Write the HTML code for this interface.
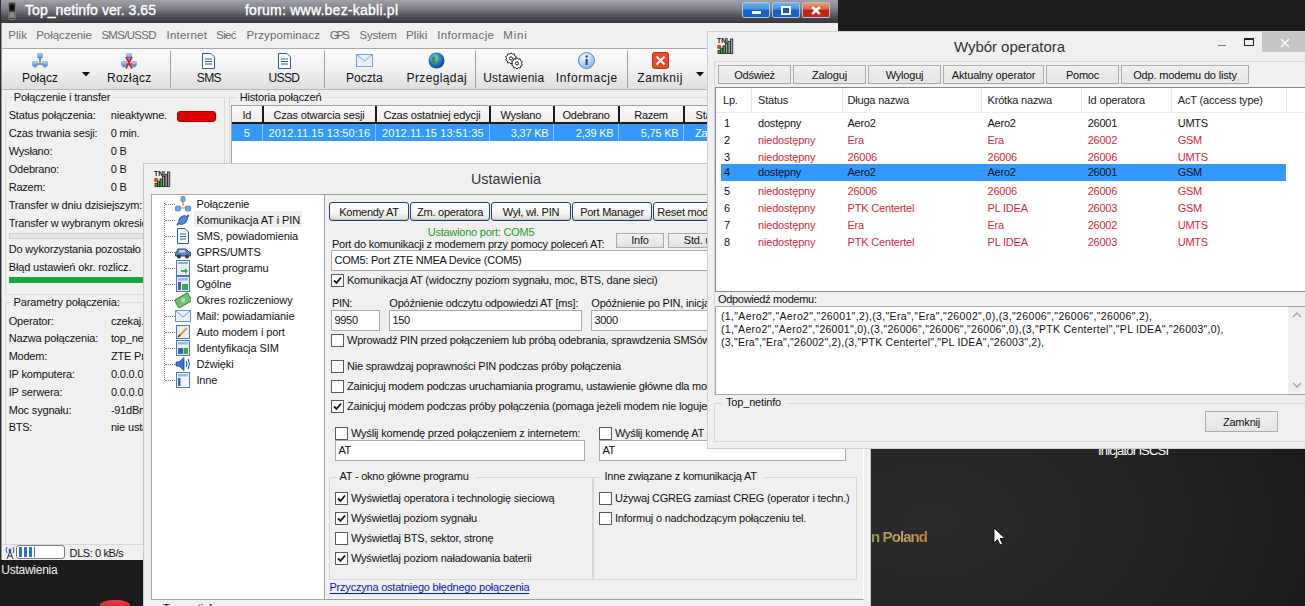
<!DOCTYPE html>
<html><head><meta charset="utf-8"><title>Top_netinfo</title>
<style>
html,body{margin:0;padding:0;width:1305px;height:606px;overflow:hidden;background:#222}
body{position:relative;font-family:"Liberation Sans", sans-serif}
div,span,svg{position:absolute;display:block}
span{white-space:pre}
</style></head><body>
<div style="left:0;top:0;width:1305px;height:606px;background:radial-gradient(ellipse 420px 260px at 930px 520px,#2b2b2b 0%,#232323 55%,#191919 100%)"></div>
<div style="left:838px;top:0;width:467px;height:32px;background:#1c1c1c"></div>
<div style="left:0;top:560px;width:143px;height:46px;background:#1b1b1b"></div>
<span style="left:1098px;top:444.00px;font-size:13px;line-height:13px;color:#fff;font-weight:400;letter-spacing:-0.812px;">Inicjator iSCSI</span>
<span style="left:871px;top:529px;font-size:15px;line-height:15px;font-weight:700;letter-spacing:-0.9px;background:linear-gradient(90deg,#9a9a58,#c7a060 60%,#c8783a);-webkit-background-clip:text;color:transparent">n Poland</span>
<svg style="position:absolute;left:993px;top:527px;" width="14" height="20" viewBox="0 0 14 20"><path d="M1 1 L1 16 L4.5 12.5 L7 18 L9.5 17 L7 11.5 L12 11.5 Z" fill="#fff" stroke="#000" stroke-width="0.8"/></svg>
<span style="left:1.3px;top:563.84px;font-size:12px;line-height:12px;color:#f2f2f2;font-weight:400;letter-spacing:-0.256px;">Ustawienia</span>
<div style="left:100px;top:600px;width:30px;height:10px;background:linear-gradient(#f04048,#c81820);border-radius:50% 50% 0 0"></div>
<div style="left:0px;top:0px;width:838px;height:23px;background:linear-gradient(#a2a2aa 0%,#7c7c84 40%,#4a4a52 75%,#38383e 100%)"></div>
<div style="left:0px;top:0px;width:1px;height:560px;background:#2c2c30"></div>
<div style="left:1px;top:23px;width:1px;height:537px;background:#9a9a9a"></div>
<svg style="position:absolute;left:8px;top:2px;" width="8" height="18" viewBox="0 0 8 18"><rect x="0.5" y="0.5" width="7" height="17" rx="1.5" fill="#444" stroke="#777"/><rect x="1.5" y="2.5" width="5" height="6" fill="#111"/><rect x="1.5" y="10" width="5" height="6" fill="#8a8a8a"/></svg>
<span style="left:25px;top:3.45px;font-size:14px;line-height:14px;color:#fff;font-weight:400;letter-spacing:0.05px;-webkit-text-stroke:0.35px #fff">Top_netinfo ver. 3.65</span>
<span style="left:245px;top:3.45px;font-size:14px;line-height:14px;color:#fff;font-weight:400;letter-spacing:0.235px;-webkit-text-stroke:0.35px #fff">forum: www.bez-kabli.pl</span>
<div style="left:742px;top:2px;width:28px;height:16px;border:1px solid #a9c3d8;border-radius:2px;box-sizing:border-box;background:linear-gradient(#6eb2ea 0%,#3f8fd8 45%,#1a5fc4 50%,#1a64cc 100%)"><div style="left:9px;top:8px;width:9px;height:3px;background:#fff"></div></div>
<div style="left:772px;top:2px;width:28px;height:16px;border:1px solid #a9c3d8;border-radius:2px;box-sizing:border-box;background:linear-gradient(#6eb2ea 0%,#3f8fd8 45%,#1a5fc4 50%,#1a64cc 100%)"><div style="left:8px;top:2.5px;width:10px;height:9px;border:2px solid #fff;border-top-width:2.5px;box-sizing:border-box;background:#1a58b8"></div></div>
<div style="left:802px;top:2px;width:28px;height:16px;border:1px solid #a9c3d8;border-radius:2px;box-sizing:border-box;background:linear-gradient(#e8a070 0%,#e06040 45%,#c81a0a 50%,#d0280e 100%)"><svg style="left:8px;top:2.5px" width="10" height="9" viewBox="0 0 10 9"><path d="M1.2 1 L8.8 8 M8.8 1 L1.2 8" stroke="#fff" stroke-width="2.4"/></svg></div>
<div style="left:2px;top:23px;width:836px;height:25px;background:#f0f0f0"></div>
<span style="left:8.3px;top:30.07px;font-size:11.5px;line-height:11.5px;color:#6a6a6a;font-weight:400;letter-spacing:0.023px;">Plik</span>
<span style="left:36.2px;top:30.07px;font-size:11.5px;line-height:11.5px;color:#6a6a6a;font-weight:400;letter-spacing:-0.052px;">Połączenie</span>
<span style="left:101.4px;top:30.07px;font-size:11.5px;line-height:11.5px;color:#6a6a6a;font-weight:400;letter-spacing:-0.697px;">SMS/USSD</span>
<span style="left:166.6px;top:30.07px;font-size:11.5px;line-height:11.5px;color:#6a6a6a;font-weight:400;letter-spacing:0.186px;">Internet</span>
<span style="left:216.2px;top:30.07px;font-size:11.5px;line-height:11.5px;color:#6a6a6a;font-weight:400;letter-spacing:-0.692px;">Sieć</span>
<span style="left:246.4px;top:30.07px;font-size:11.5px;line-height:11.5px;color:#6a6a6a;font-weight:400;letter-spacing:0.126px;">Przypominacz</span>
<span style="left:329.7px;top:30.07px;font-size:11.5px;line-height:11.5px;color:#6a6a6a;font-weight:400;letter-spacing:-2.048px;">GPS</span>
<span style="left:359.5px;top:30.07px;font-size:11.5px;line-height:11.5px;color:#6a6a6a;font-weight:400;letter-spacing:-0.209px;">System</span>
<span style="left:406px;top:30.07px;font-size:11.5px;line-height:11.5px;color:#6a6a6a;font-weight:400;letter-spacing:0.077px;">Pliki</span>
<span style="left:437.2px;top:30.07px;font-size:11.5px;line-height:11.5px;color:#6a6a6a;font-weight:400;letter-spacing:0.346px;">Informacje</span>
<span style="left:503.2px;top:30.07px;font-size:11.5px;line-height:11.5px;color:#6a6a6a;font-weight:400;letter-spacing:0.869px;">Mini</span>
<div style="left:2px;top:48px;width:836px;height:1px;background:#a8a8a8"></div>
<div style="left:2px;top:49px;width:836px;height:40px;background:linear-gradient(#fbfbfb 0%,#f2f2f2 50%,#dedede 100%)"></div>
<div style="left:2px;top:89px;width:836px;height:1px;background:#b8b8b8"></div>
<div style="left:170px;top:51px;width:1px;height:37px;background:#a0a0a0"></div>
<div style="left:324px;top:51px;width:1px;height:37px;background:#a0a0a0"></div>
<div style="left:475px;top:51px;width:1px;height:37px;background:#a0a0a0"></div>
<div style="left:627px;top:51px;width:1px;height:37px;background:#a0a0a0"></div>
<span style="left:-160px;width:400px;text-align:center;top:71.64px;font-size:12px;line-height:12px;color:#111;font-weight:400;letter-spacing:0.034px;">Połącz</span>
<span style="left:-70.80000000000001px;width:400px;text-align:center;top:71.64px;font-size:12px;line-height:12px;color:#111;font-weight:400;letter-spacing:0.252px;">Rozłącz</span>
<span style="left:8.900000000000006px;width:400px;text-align:center;top:71.64px;font-size:12px;line-height:12px;color:#111;font-weight:400;letter-spacing:-0.508px;">SMS</span>
<span style="left:83.89999999999998px;width:400px;text-align:center;top:71.64px;font-size:12px;line-height:12px;color:#111;font-weight:400;letter-spacing:-0.581px;">USSD</span>
<span style="left:164.3px;width:400px;text-align:center;top:71.64px;font-size:12px;line-height:12px;color:#111;font-weight:400;letter-spacing:-0.017px;">Poczta</span>
<span style="left:236.8px;width:400px;text-align:center;top:71.64px;font-size:12px;line-height:12px;color:#111;font-weight:400;letter-spacing:0.366px;">Przeglądaj</span>
<span style="left:313.79999999999995px;width:400px;text-align:center;top:71.64px;font-size:12px;line-height:12px;color:#111;font-weight:400;letter-spacing:0.255px;">Ustawienia</span>
<span style="left:386.79999999999995px;width:400px;text-align:center;top:71.64px;font-size:12px;line-height:12px;color:#111;font-weight:400;letter-spacing:0.608px;">Informacje</span>
<span style="left:460.1px;width:400px;text-align:center;top:71.64px;font-size:12px;line-height:12px;color:#111;font-weight:400;letter-spacing:0.497px;">Zamknij</span>
<svg style="position:absolute;left:81.7px;top:72px;" width="8" height="5" viewBox="0 0 8 5"><path d="M0 0 L8 0 L4 4.5 Z" fill="#111"/></svg>
<svg style="position:absolute;left:695.5px;top:72px;" width="8" height="5" viewBox="0 0 8 5"><path d="M0 0 L8 0 L4 4.5 Z" fill="#111"/></svg>
<svg style="position:absolute;left:32px;top:53px;" width="16" height="16" viewBox="0 0 16 16"><defs><linearGradient id="ng" x1="0" y1="0" x2="0" y2="1"><stop offset="0" stop-color="#b8dcfa"/><stop offset="1" stop-color="#3f86d8"/></linearGradient></defs><path d="M8 6 V10 M3 11 H13" stroke="#3a3a2a" stroke-width="1"/><circle cx="8" cy="10.5" r="1.3" fill="#c0a040"/><rect x="5.5" y="0.5" width="5" height="4.5" rx="1" fill="url(#ng)" stroke="#4a86c8" stroke-width="0.5"/><rect x="6.5" y="5.0" width="3" height="1.5" fill="#6a9ad0"/><rect x="0.5" y="8.5" width="5" height="4.5" rx="1" fill="url(#ng)" stroke="#4a86c8" stroke-width="0.5"/><rect x="1.5" y="13.0" width="3" height="1.5" fill="#6a9ad0"/><rect x="10.5" y="8.5" width="5" height="4.5" rx="1" fill="url(#ng)" stroke="#4a86c8" stroke-width="0.5"/><rect x="11.5" y="13.0" width="3" height="1.5" fill="#6a9ad0"/></svg>
<svg style="position:absolute;left:121px;top:53px;" width="16" height="16" viewBox="0 0 16 16"><defs><linearGradient id="ng" x1="0" y1="0" x2="0" y2="1"><stop offset="0" stop-color="#b8dcfa"/><stop offset="1" stop-color="#3f86d8"/></linearGradient></defs><path d="M8 6 V10 M3 11 H13" stroke="#3a3a2a" stroke-width="1"/><circle cx="8" cy="10.5" r="1.3" fill="#c0a040"/><rect x="5.5" y="0.5" width="5" height="4.5" rx="1" fill="url(#ng)" stroke="#4a86c8" stroke-width="0.5"/><rect x="6.5" y="5.0" width="3" height="1.5" fill="#6a9ad0"/><rect x="0.5" y="8.5" width="5" height="4.5" rx="1" fill="url(#ng)" stroke="#4a86c8" stroke-width="0.5"/><rect x="1.5" y="13.0" width="3" height="1.5" fill="#6a9ad0"/><rect x="10.5" y="8.5" width="5" height="4.5" rx="1" fill="url(#ng)" stroke="#4a86c8" stroke-width="0.5"/><rect x="11.5" y="13.0" width="3" height="1.5" fill="#6a9ad0"/><path d="M5 4 L11 15.5 M11 4 L5 15.5" stroke="#e41818" stroke-width="1.7"/></svg>
<svg style="position:absolute;left:202px;top:53px;" width="13" height="16" viewBox="0 0 13 16"><path d="M0.5 0.5 H9 L12.5 4 V15.5 H0.5 Z" fill="#fff" stroke="#2a58a8"/><path d="M3 6 H10 M3 8.5 H10 M3 11 H10" stroke="#2a58a8" stroke-width="1"/></svg>
<svg style="position:absolute;left:278px;top:53px;" width="13" height="16" viewBox="0 0 13 16"><path d="M0.5 0.5 H9 L12.5 4 V15.5 H0.5 Z" fill="#fff" stroke="#2a58a8"/><path d="M3 6 H10 M3 8.5 H10 M3 11 H10" stroke="#2a58a8" stroke-width="1"/></svg>
<svg style="position:absolute;left:356px;top:54px;" width="17" height="13" viewBox="0 0 17 13"><rect x="0.5" y="0.5" width="16" height="12" fill="#e8f0fa" stroke="#7aa0cc"/><path d="M0.5 0.5 L8.5 7 L16.5 0.5" fill="none" stroke="#7aa0cc"/></svg>
<svg style="position:absolute;left:428px;top:52px;" width="17" height="17" viewBox="0 0 17 17"><defs><radialGradient id="g1" cx="0.4" cy="0.35" r="0.7"><stop offset="0" stop-color="#9fd0ff"/><stop offset="0.5" stop-color="#2a7fd0"/><stop offset="1" stop-color="#0a3a80"/></radialGradient></defs><circle cx="8.5" cy="8.5" r="8" fill="url(#g1)"/><path d="M4 5 Q7 3 8 6 Q6 9 9 11 Q7 14 5 12 Q3 9 4 5Z M10 3 Q13 4 14 7 Q12 8 11 6Z" fill="#3a9a3a"/></svg>
<svg style="position:absolute;left:505px;top:52px;" width="18" height="17" viewBox="0 0 18 17"><g fill="#fff" stroke="#222" stroke-width="1"><path d="M6 0.8 L7.3 2.2 L9.2 1.8 L9.6 3.7 L11.3 4.6 L10.5 6.4 L11.3 8.2 L9.6 9.1 L9.2 11 L7.3 10.6 L6 12 L4.7 10.6 L2.8 11 L2.4 9.1 L0.7 8.2 L1.5 6.4 L0.7 4.6 L2.4 3.7 L2.8 1.8 L4.7 2.2 Z"/><path d="M12 5.8 L13.3 7.2 L15.2 6.8 L15.6 8.7 L17.3 9.6 L16.5 11.4 L17.3 13.2 L15.6 14.1 L15.2 16 L13.3 15.6 L12 17 L10.7 15.6 L8.8 16 L8.4 14.1 L6.7 13.2 L7.5 11.4 L6.7 9.6 L8.4 8.7 L8.8 6.8 L10.7 7.2 Z"/><circle cx="6" cy="6.4" r="1.6"/><circle cx="12" cy="11.4" r="1.6"/></g></svg>
<svg style="position:absolute;left:578px;top:52px;" width="17" height="17" viewBox="0 0 17 17"><defs><radialGradient id="g2" cx="0.4" cy="0.3" r="0.8"><stop offset="0" stop-color="#fff"/><stop offset="1" stop-color="#7ab0e8"/></radialGradient></defs><circle cx="8.5" cy="8.5" r="8" fill="url(#g2)" stroke="#4a88d0"/><rect x="7.5" y="7" width="2.2" height="6" fill="#1a4ea8"/><circle cx="8.6" cy="4.5" r="1.2" fill="#1a4ea8"/></svg>
<svg style="position:absolute;left:652px;top:52px;" width="17" height="17" viewBox="0 0 17 17"><rect x="0.5" y="0.5" width="16" height="16" rx="2" fill="#e84a30" stroke="#c03018"/><path d="M4.5 4.5 L12.5 12.5 M12.5 4.5 L4.5 12.5" stroke="#fff" stroke-width="1.8"/></svg>
<div style="left:2px;top:90px;width:706px;height:454px;background:#f0f0f0"></div>
<div style="left:5px;top:97px;width:220px;height:198px;border:1px solid #dcdcdc;box-sizing:border-box"></div>
<div style="left:12px;top:92px;width:90px;height:10px;background:#f0f0f0"></div>
<span style="left:13.8px;top:92.19px;font-size:11px;line-height:11px;color:#111;font-weight:400;letter-spacing:-0.15px;">Połączenie i transfer</span>
<span style="left:8.7px;top:109.69px;font-size:11px;line-height:11px;color:#111;font-weight:400;letter-spacing:-0.159px;">Status połączenia:</span>
<span style="left:110.8px;top:109.69px;font-size:11px;line-height:11px;color:#111;font-weight:400;letter-spacing:-0.174px;">nieaktywne.</span>
<span style="left:8.7px;top:127.69px;font-size:11px;line-height:11px;color:#111;font-weight:400;letter-spacing:-0.153px;">Czas trwania sesji:</span>
<span style="left:110.8px;top:127.69px;font-size:11px;line-height:11px;color:#111;font-weight:400;letter-spacing:-0.18px;">0 min.</span>
<span style="left:8.7px;top:145.69px;font-size:11px;line-height:11px;color:#111;font-weight:400;letter-spacing:-0.193px;">Wysłano:</span>
<span style="left:110.8px;top:145.69px;font-size:11px;line-height:11px;color:#111;font-weight:400;letter-spacing:-0.248px;">0 B</span>
<span style="left:8.7px;top:163.69px;font-size:11px;line-height:11px;color:#111;font-weight:400;letter-spacing:-0.195px;">Odebrano:</span>
<span style="left:110.8px;top:163.69px;font-size:11px;line-height:11px;color:#111;font-weight:400;letter-spacing:-0.248px;">0 B</span>
<span style="left:8.7px;top:181.69px;font-size:11px;line-height:11px;color:#111;font-weight:400;letter-spacing:-0.227px;">Razem:</span>
<span style="left:110.8px;top:181.69px;font-size:11px;line-height:11px;color:#111;font-weight:400;letter-spacing:-0.248px;">0 B</span>
<div style="left:177px;top:111px;width:39px;height:11px;background:#e00000;border-radius:3px;border:1px solid #b00000;box-sizing:border-box"></div>
<span style="left:8.7px;top:199.69px;font-size:11px;line-height:11px;color:#111;font-weight:400;letter-spacing:-0.153px;">Transfer w dniu dzisiejszym:</span>
<span style="left:8.7px;top:217.69px;font-size:11px;line-height:11px;color:#111;font-weight:400;letter-spacing:-0.163px;">Transfer w wybranym okresie:</span>
<div style="left:9px;top:233px;width:134px;height:6px;background:#e6e6e6;border:1px solid #cfcfcf;box-sizing:border-box"></div>
<span style="left:8.7px;top:243.69px;font-size:11px;line-height:11px;color:#111;font-weight:400;letter-spacing:-0.164px;">Do wykorzystania pozostało</span>
<span style="left:8.7px;top:261.69px;font-size:11px;line-height:11px;color:#111;font-weight:400;letter-spacing:-0.146px;">Błąd ustawień okr. rozlicz.</span>
<div style="left:9px;top:277px;width:134px;height:6px;background:#14a83a"></div>
<div style="left:5px;top:302px;width:220px;height:255px;border:1px solid #dcdcdc;box-sizing:border-box"></div>
<div style="left:12px;top:297px;width:96px;height:10px;background:#f0f0f0"></div>
<span style="left:13.6px;top:296.69px;font-size:11px;line-height:11px;color:#111;font-weight:400;letter-spacing:-0.164px;">Parametry połączenia:</span>
<span style="left:8.7px;top:315.69px;font-size:11px;line-height:11px;color:#111;font-weight:400;letter-spacing:-0.174px;">Operator:</span>
<span style="left:110.9px;top:315.69px;font-size:11px;line-height:11px;color:#111;font-weight:400;letter-spacing:-0.151px;">czekaj...</span>
<span style="left:8.7px;top:333.19px;font-size:11px;line-height:11px;color:#111;font-weight:400;letter-spacing:-0.173px;">Nazwa połączenia:</span>
<span style="left:110.9px;top:333.19px;font-size:11px;line-height:11px;color:#111;font-weight:400;letter-spacing:-0.163px;">top_netinfo</span>
<span style="left:8.7px;top:350.99px;font-size:11px;line-height:11px;color:#111;font-weight:400;letter-spacing:-0.239px;">Modem:</span>
<span style="left:110.9px;top:350.99px;font-size:11px;line-height:11px;color:#111;font-weight:400;letter-spacing:-0.166px;">ZTE Proprietary</span>
<span style="left:8.7px;top:368.89px;font-size:11px;line-height:11px;color:#111;font-weight:400;letter-spacing:-0.171px;">IP komputera:</span>
<span style="left:110.9px;top:368.89px;font-size:11px;line-height:11px;color:#111;font-weight:400;letter-spacing:-0.168px;">0.0.0.0</span>
<span style="left:8.7px;top:386.69px;font-size:11px;line-height:11px;color:#111;font-weight:400;letter-spacing:-0.166px;">IP serwera:</span>
<span style="left:110.9px;top:386.69px;font-size:11px;line-height:11px;color:#111;font-weight:400;letter-spacing:-0.168px;">0.0.0.0</span>
<span style="left:8.7px;top:404.69px;font-size:11px;line-height:11px;color:#111;font-weight:400;letter-spacing:-0.177px;">Moc sygnału:</span>
<span style="left:110.9px;top:404.69px;font-size:11px;line-height:11px;color:#111;font-weight:400;letter-spacing:-0.231px;">-91dBm</span>
<span style="left:8.7px;top:422.19px;font-size:11px;line-height:11px;color:#111;font-weight:400;letter-spacing:-0.245px;">BTS:</span>
<span style="left:110.9px;top:422.19px;font-size:11px;line-height:11px;color:#111;font-weight:400;letter-spacing:-0.168px;">nie ustawione</span>
<div style="left:2px;top:544px;width:141px;height:16px;background:#f0f0f0;border-top:1px solid #d8d8d8;box-sizing:border-box"></div>
<svg style="position:absolute;left:5px;top:546px;" width="10" height="13" viewBox="0 0 10 13"><circle cx="5" cy="4" r="1.5" fill="#2a5ab0"/><path d="M2 1 Q0 4 2 7 M8 1 Q10 4 8 7" stroke="#2a5ab0" fill="none"/><path d="M5 5 L2 13 M5 5 L8 13 M3 10 H7" stroke="#333"/></svg>
<div style="left:16px;top:545px;width:49px;height:14px;background:#fff;border:1px solid #7a7a7a;border-radius:3px;box-sizing:border-box"></div>
<div style="left:19px;top:547px;width:3px;height:10px;background:#2e6cd0"></div>
<div style="left:24px;top:547px;width:3px;height:10px;background:#2e6cd0"></div>
<div style="left:29px;top:547px;width:3px;height:10px;background:#2e6cd0"></div>
<div style="left:34px;top:547px;width:1px;height:10px;background:#2e6cd0"></div>
<span style="left:69.6px;top:547.89px;font-size:11px;line-height:11px;color:#111;font-weight:400;letter-spacing:-0.408px;">DLS: 0 kB/s</span>
<div style="left:229px;top:97px;width:500px;height:80px;border:1px solid #dcdcdc;box-sizing:border-box"></div>
<div style="left:236px;top:92px;width:90px;height:10px;background:#f0f0f0"></div>
<span style="left:239.7px;top:92.19px;font-size:11px;line-height:11px;color:#111;font-weight:400;letter-spacing:-0.158px;">Historia połączeń</span>
<div style="left:231px;top:105px;width:477px;height:59px;background:#fff;border:1px solid #a0a0a0;border-right:none;box-sizing:border-box"></div>
<div style="left:232px;top:106px;width:476px;height:17px;background:linear-gradient(#fafafa,#ececec)"></div>
<div style="left:232px;top:122px;width:476px;height:2px;background:#1a1a1a"></div>
<div style="left:262px;top:106px;width:2px;height:17px;background:#1a1a1a"></div>
<div style="left:375px;top:106px;width:2px;height:17px;background:#1a1a1a"></div>
<div style="left:489px;top:106px;width:2px;height:17px;background:#1a1a1a"></div>
<div style="left:553px;top:106px;width:2px;height:17px;background:#1a1a1a"></div>
<div style="left:618px;top:106px;width:2px;height:17px;background:#1a1a1a"></div>
<div style="left:683px;top:106px;width:2px;height:17px;background:#1a1a1a"></div>
<div style="left:232px;top:124px;width:476px;height:17px;background:#3399ff"></div>
<div style="left:262px;top:124px;width:1px;height:17px;background:#8cc6ff"></div>
<div style="left:375px;top:124px;width:1px;height:17px;background:#8cc6ff"></div>
<div style="left:489px;top:124px;width:1px;height:17px;background:#8cc6ff"></div>
<div style="left:553px;top:124px;width:1px;height:17px;background:#8cc6ff"></div>
<div style="left:618px;top:124px;width:1px;height:17px;background:#8cc6ff"></div>
<div style="left:683px;top:124px;width:1px;height:17px;background:#8cc6ff"></div>
<span style="left:46.69999999999999px;width:400px;text-align:center;top:110.19px;font-size:11px;line-height:11px;color:#111;font-weight:400;letter-spacing:-0.276px;">Id</span>
<span style="left:119px;width:400px;text-align:center;top:110.19px;font-size:11px;line-height:11px;color:#111;font-weight:400;letter-spacing:-0.157px;">Czas otwarcia sesji</span>
<span style="left:232px;width:400px;text-align:center;top:110.19px;font-size:11px;line-height:11px;color:#111;font-weight:400;letter-spacing:-0.15px;">Czas ostatniej edycji</span>
<span style="left:320.79999999999995px;width:400px;text-align:center;top:110.19px;font-size:11px;line-height:11px;color:#111;font-weight:400;letter-spacing:-0.21px;">Wysłano</span>
<span style="left:386px;width:400px;text-align:center;top:110.19px;font-size:11px;line-height:11px;color:#111;font-weight:400;letter-spacing:-0.21px;">Odebrano</span>
<span style="left:451px;width:400px;text-align:center;top:110.19px;font-size:11px;line-height:11px;color:#111;font-weight:400;letter-spacing:-0.261px;">Razem</span>
<span style="left:695.5px;top:110.19px;font-size:11px;line-height:11px;color:#111;font-weight:400;letter-spacing:-0.187px;">Status</span>
<span style="left:46.69999999999999px;width:400px;text-align:center;top:127.69px;font-size:11px;line-height:11px;color:#fff;font-weight:400;letter-spacing:-0.184px;">5</span>
<span style="left:268.6px;top:127.69px;font-size:11px;line-height:11px;color:#fff;font-weight:400;letter-spacing:0.082px;">2012.11.15 13:50:16</span>
<span style="left:382px;top:127.69px;font-size:11px;line-height:11px;color:#fff;font-weight:400;letter-spacing:0.082px;">2012.11.15 13:51:35</span>
<span style="left:148.5px;width:400px;text-align:right;top:127.69px;font-size:11px;line-height:11px;color:#fff;font-weight:400;letter-spacing:-0.196px;">3,37 KB</span>
<span style="left:213.5px;width:400px;text-align:right;top:127.69px;font-size:11px;line-height:11px;color:#fff;font-weight:400;letter-spacing:-0.196px;">2,39 KB</span>
<span style="left:278.5px;width:400px;text-align:right;top:127.69px;font-size:11px;line-height:11px;color:#fff;font-weight:400;letter-spacing:-0.196px;">5,75 KB</span>
<span style="left:695px;top:127.69px;font-size:11px;line-height:11px;color:#fff;font-weight:400;letter-spacing:-0.2px;">Zakończone</span>
<div style="left:143px;top:163px;width:728px;height:450px;background:#f0f0f0;border:1px solid #c8c8c8;box-sizing:border-box"></div>
<svg style="position:absolute;left:153px;top:170px;" width="18" height="17" viewBox="0 0 18 17"><text x="1" y="5.6" font-family="Liberation Sans" font-weight="700" font-size="6.8" fill="#111">TNI</text><rect x="2.0" y="13.5" width="2.3" height="3.0" fill="#30b030" stroke="#111" stroke-width="0.7"/><rect x="4.5" y="11.2" width="2.3" height="5.3" fill="#30b030" stroke="#111" stroke-width="0.7"/><rect x="7.0" y="8.9" width="2.3" height="7.6" fill="#30b030" stroke="#111" stroke-width="0.7"/><rect x="9.5" y="6.6" width="2.3" height="9.9" fill="#9aa0a0" stroke="#111" stroke-width="0.7"/><rect x="12.0" y="4.3" width="2.3" height="12.2" fill="#9aa0a0" stroke="#111" stroke-width="0.7"/><rect x="14.5" y="2.0" width="2.3" height="14.5" fill="#9aa0a0" stroke="#111" stroke-width="0.7"/><circle cx="3.2" cy="10" r="2.2" fill="#d84028"/></svg>
<span style="left:471px;top:171.90px;font-size:14.3px;line-height:14.3px;color:#333;font-weight:400;letter-spacing:0.007px;">Ustawienia</span>
<div style="left:151px;top:194px;width:174px;height:406px;background:#fff;border:1px solid #a8a8a8;box-sizing:border-box"></div>
<div style="left:164px;top:203px;width:0;height:177px;border-left:1px dotted #808080"></div>
<div style="left:165px;top:204px;width:10px;height:0;border-top:1px dotted #808080"></div>
<div style="left:165px;top:220px;width:10px;height:0;border-top:1px dotted #808080"></div>
<div style="left:165px;top:236px;width:10px;height:0;border-top:1px dotted #808080"></div>
<div style="left:165px;top:252px;width:10px;height:0;border-top:1px dotted #808080"></div>
<div style="left:165px;top:268px;width:10px;height:0;border-top:1px dotted #808080"></div>
<div style="left:165px;top:284px;width:10px;height:0;border-top:1px dotted #808080"></div>
<div style="left:165px;top:300px;width:10px;height:0;border-top:1px dotted #808080"></div>
<div style="left:165px;top:316px;width:10px;height:0;border-top:1px dotted #808080"></div>
<div style="left:165px;top:332px;width:10px;height:0;border-top:1px dotted #808080"></div>
<div style="left:165px;top:348px;width:10px;height:0;border-top:1px dotted #808080"></div>
<div style="left:165px;top:364px;width:10px;height:0;border-top:1px dotted #808080"></div>
<div style="left:165px;top:380px;width:10px;height:0;border-top:1px dotted #808080"></div>
<div style="left:194px;top:211px;width:108px;height:16px;background:#eeeeee"></div>
<span style="left:196.4px;top:198.69px;font-size:11px;line-height:11px;color:#111;font-weight:400;letter-spacing:-0.09px;">Połączenie</span>
<span style="left:196.4px;top:214.69px;font-size:11px;line-height:11px;color:#111;font-weight:400;letter-spacing:-0.083px;">Komunikacja AT i PIN</span>
<span style="left:196.4px;top:230.69px;font-size:11px;line-height:11px;color:#111;font-weight:400;letter-spacing:-0.091px;">SMS, powiadomienia</span>
<span style="left:196.4px;top:246.69px;font-size:11px;line-height:11px;color:#111;font-weight:400;letter-spacing:-0.123px;">GPRS/UMTS</span>
<span style="left:196.4px;top:262.69px;font-size:11px;line-height:11px;color:#111;font-weight:400;letter-spacing:-0.085px;">Start programu</span>
<span style="left:196.4px;top:278.69px;font-size:11px;line-height:11px;color:#111;font-weight:400;letter-spacing:-0.106px;">Ogólne</span>
<span style="left:196.4px;top:294.69px;font-size:11px;line-height:11px;color:#111;font-weight:400;letter-spacing:-0.082px;">Okres rozliczeniowy</span>
<span style="left:196.4px;top:310.69px;font-size:11px;line-height:11px;color:#111;font-weight:400;letter-spacing:-0.083px;">Mail: powiadamianie</span>
<span style="left:196.4px;top:326.69px;font-size:11px;line-height:11px;color:#111;font-weight:400;letter-spacing:-0.084px;">Auto modem i port</span>
<span style="left:196.4px;top:342.69px;font-size:11px;line-height:11px;color:#111;font-weight:400;letter-spacing:-0.079px;">Identyfikacja SIM</span>
<span style="left:196.4px;top:358.69px;font-size:11px;line-height:11px;color:#111;font-weight:400;letter-spacing:-0.095px;">Dźwięki</span>
<span style="left:196.4px;top:374.69px;font-size:11px;line-height:11px;color:#111;font-weight:400;letter-spacing:-0.107px;">Inne</span>
<svg style="position:absolute;left:175px;top:196px;" width="16" height="16" viewBox="0 0 16 16"><g fill="#6aaee8" stroke="#2f6fb8" stroke-width="0.6"><rect x="6" y="0.5" width="4" height="5" rx="1"/><rect x="0.5" y="10" width="5" height="5" rx="1"/><rect x="10.5" y="10" width="5" height="5" rx="1"/></g><path d="M8 5 L8 10 M4 12 L12 12" stroke="#b08a30" stroke-width="1.2"/></svg>
<svg style="position:absolute;left:175px;top:212px;" width="16" height="16" viewBox="0 0 16 16"><path d="M2 13 L6 9 M10 7 L14 3" stroke="#3a6ab8" stroke-width="2"/><ellipse cx="8" cy="8" rx="5" ry="3.5" transform="rotate(-45 8 8)" fill="#5a8ad0" stroke="#2a5aa8"/></svg>
<svg style="position:absolute;left:175px;top:228px;" width="16" height="16" viewBox="0 0 16 16"><path d="M2.5 0.5 H10 L13.5 4 V15.5 H2.5 Z" fill="#fff" stroke="#2a58a8"/><path d="M5 6 H11 M5 8.5 H11 M5 11 H11" stroke="#2a58a8"/></svg>
<svg style="position:absolute;left:175px;top:244px;" width="16" height="16" viewBox="0 0 16 16"><path d="M1 9 L3 5 H11 L14 8 H15.5 V12 H0.5 V9Z" fill="#5a86c0" stroke="#2a4a80"/><circle cx="4" cy="12.5" r="2" fill="#333"/><circle cx="12" cy="12.5" r="2" fill="#333"/><rect x="4" y="6" width="6" height="2.5" fill="#bcd4f0"/></svg>
<svg style="position:absolute;left:175px;top:260px;" width="16" height="16" viewBox="0 0 16 16"><rect x="1.5" y="0.5" width="13" height="15" fill="#e8f0fa" stroke="#4a78b8"/><rect x="3" y="2" width="10" height="2" fill="#8ab0e0"/><path d="M6 10 H10 V8 L13 11 L10 14 V12 H6Z" fill="#40a840"/></svg>
<svg style="position:absolute;left:175px;top:276px;" width="16" height="16" viewBox="0 0 16 16"><rect x="1.5" y="0.5" width="13" height="15" fill="#e8f0fa" stroke="#4a78b8"/><rect x="3" y="2" width="10" height="2.5" fill="#9ab8e0"/><rect x="3" y="6" width="3" height="8" fill="#3a68b0"/><rect x="7" y="8" width="6" height="6" fill="#40a840"/></svg>
<svg style="position:absolute;left:175px;top:292px;" width="16" height="16" viewBox="0 0 16 16"><g transform="rotate(-30 8 8)"><rect x="0.5" y="4" width="15" height="9" rx="1" fill="#70c070" stroke="#3a903a"/><circle cx="8" cy="8.5" r="2.3" fill="#a8e0a8"/></g></svg>
<svg style="position:absolute;left:175px;top:308px;" width="16" height="16" viewBox="0 0 16 16"><rect x="0.5" y="2.5" width="15" height="11" fill="#eaf2fc" stroke="#6a94c8"/><path d="M0.5 2.5 L8 9 L15.5 2.5" fill="none" stroke="#6a94c8"/></svg>
<svg style="position:absolute;left:175px;top:324px;" width="16" height="16" viewBox="0 0 16 16"><rect x="1.5" y="1.5" width="13" height="13" fill="#e8f0fa" stroke="#4a78b8"/><path d="M4 12 L12 4" stroke="#e0a020" stroke-width="2"/><path d="M3 13 L5 11" stroke="#333" stroke-width="1.5"/></svg>
<svg style="position:absolute;left:175px;top:340px;" width="16" height="16" viewBox="0 0 16 16"><rect x="1.5" y="0.5" width="13" height="15" fill="#e8f0fa" stroke="#4a78b8"/><rect x="3" y="2" width="10" height="2.5" fill="#9ab8e0"/><rect x="3" y="8" width="5" height="6" fill="#3a68b0"/><rect x="8.5" y="8" width="4.5" height="6" fill="#40a840"/></svg>
<svg style="position:absolute;left:175px;top:356px;" width="16" height="16" viewBox="0 0 16 16"><path d="M1 6 H4 L9 1.5 V14.5 L4 10 H1Z" fill="#3a78d0" stroke="#1a4a98" stroke-width="0.8"/><path d="M11 5 Q13 8 11 11 M13 3 Q16 8 13 13" stroke="#1a4a98" fill="none"/></svg>
<svg style="position:absolute;left:175px;top:372px;" width="16" height="16" viewBox="0 0 16 16"><rect x="1.5" y="0.5" width="13" height="15" fill="#f4f8fc" stroke="#4a78b8"/><rect x="3" y="2" width="10" height="2.5" fill="#9ab8e0"/><rect x="3" y="6" width="2.5" height="8" fill="#3a68b0"/></svg>
<div style="left:324px;top:194px;width:540px;height:406px;border-left:1px solid #a0a0a0;border-top:1px solid #a0a0a0;border-right:1px solid #fff;border-bottom:1px solid #a0a0a0;box-sizing:border-box"></div>
<div style="left:329px;top:202px;width:80px;height:19px;border:1px solid #1e3f78;border-radius:3px;box-sizing:border-box;background:linear-gradient(#ffffff 0%,#f4f4f0 60%,#dcdcd4 100%);box-shadow:inset 0 -1px 0 #c8c8c0"></div>
<span style="left:169.0px;width:400px;text-align:center;top:206.79px;font-size:11px;line-height:11px;color:#111;font-weight:400;letter-spacing:-0.276px;">Komendy AT</span>
<div style="left:410px;top:202px;width:80px;height:19px;border:1px solid #1e3f78;border-radius:3px;box-sizing:border-box;background:linear-gradient(#ffffff 0%,#f4f4f0 60%,#dcdcd4 100%);box-shadow:inset 0 -1px 0 #c8c8c0"></div>
<span style="left:250.0px;width:400px;text-align:center;top:206.79px;font-size:11px;line-height:11px;color:#111;font-weight:400;letter-spacing:-0.23px;">Zm. operatora</span>
<div style="left:491px;top:202px;width:80px;height:19px;border:1px solid #1e3f78;border-radius:3px;box-sizing:border-box;background:linear-gradient(#ffffff 0%,#f4f4f0 60%,#dcdcd4 100%);box-shadow:inset 0 -1px 0 #c8c8c0"></div>
<span style="left:331.0px;width:400px;text-align:center;top:206.79px;font-size:11px;line-height:11px;color:#111;font-weight:400;letter-spacing:-0.215px;">Wył, wł. PIN</span>
<div style="left:572px;top:202px;width:80px;height:19px;border:1px solid #1e3f78;border-radius:3px;box-sizing:border-box;background:linear-gradient(#ffffff 0%,#f4f4f0 60%,#dcdcd4 100%);box-shadow:inset 0 -1px 0 #c8c8c0"></div>
<span style="left:412.0px;width:400px;text-align:center;top:206.79px;font-size:11px;line-height:11px;color:#111;font-weight:400;letter-spacing:-0.242px;">Port Manager</span>
<div style="left:653px;top:202px;width:80px;height:19px;border:1px solid #1e3f78;border-radius:3px;box-sizing:border-box;background:linear-gradient(#ffffff 0%,#f4f4f0 60%,#dcdcd4 100%);box-shadow:inset 0 -1px 0 #c8c8c0"></div>
<span style="left:493.0px;width:400px;text-align:center;top:206.79px;font-size:11px;line-height:11px;color:#111;font-weight:400;letter-spacing:-0.271px;">Reset modemu</span>
<span style="left:427.7px;top:226.99px;font-size:11px;line-height:11px;color:#2a9a2a;font-weight:400;letter-spacing:-0.234px;">Ustawiono port: COM5</span>
<span style="left:331.9px;top:238.99px;font-size:11px;line-height:11px;color:#111;font-weight:400;letter-spacing:-0.219px;">Port do komunikacji z modemem przy pomocy poleceń AT:</span>
<div style="left:616px;top:233px;width:48px;height:15px;border:1px solid #acacac;box-sizing:border-box;background:linear-gradient(#f2f2f2,#e2e2e2)"></div>
<span style="left:440.0px;width:400px;text-align:center;top:235.19px;font-size:11px;line-height:11px;color:#111;font-weight:400;letter-spacing:-0.245px;">Info</span>
<div style="left:668px;top:233px;width:103px;height:15px;border:1px solid #acacac;box-sizing:border-box;background:linear-gradient(#f2f2f2,#e2e2e2)"></div>
<span style="left:519.5px;width:400px;text-align:center;top:235.19px;font-size:11px;line-height:11px;color:#111;font-weight:400;letter-spacing:-0.213px;">Std. ustawienia</span>
<div style="left:331px;top:250px;width:400px;height:21px;background:#fff;border:1px solid #a9a9a9;box-sizing:border-box"></div>
<span style="left:334.5px;top:254.79px;font-size:11px;line-height:11px;color:#111;font-weight:400;letter-spacing:-0.244px;">COM5: Port ZTE NMEA Device (COM5)</span>
<div style="left:331px;top:274px;width:13px;height:13px;background:#fff;border:1px solid #5a5a5a;box-sizing:border-box"></div>
<svg style="position:absolute;left:333px;top:276px;" width="9" height="9" viewBox="0 0 9 9"><path d="M1 4.5 L3.5 7 L8 1.5" fill="none" stroke="#111" stroke-width="1.8"/></svg>
<span style="left:347px;top:275.19px;font-size:11px;line-height:11px;color:#111;font-weight:400;letter-spacing:-0.212px;">Komunikacja AT (widoczny poziom sygnału, moc, BTS, dane sieci)</span>
<span style="left:331.9px;top:297.69px;font-size:11px;line-height:11px;color:#111;font-weight:400;letter-spacing:-0.285px;">PIN:</span>
<span style="left:389.3px;top:297.69px;font-size:11px;line-height:11px;color:#111;font-weight:400;letter-spacing:-0.213px;">Opóźnienie odczytu odpowiedzi AT [ms]:</span>
<span style="left:591.3px;top:297.69px;font-size:11px;line-height:11px;color:#111;font-weight:400;letter-spacing:-0.192px;">Opóźnienie po PIN, inicjalizacji [ms]:</span>
<div style="left:331px;top:310px;width:49px;height:21px;background:#fff;border:1px solid #a9a9a9;box-sizing:border-box"></div>
<span style="left:334.5px;top:314.79px;font-size:11px;line-height:11px;color:#111;font-weight:400;letter-spacing:-0.326px;">9950</span>
<div style="left:389px;top:310px;width:193px;height:21px;background:#fff;border:1px solid #a9a9a9;box-sizing:border-box"></div>
<span style="left:392.5px;top:314.79px;font-size:11px;line-height:11px;color:#111;font-weight:400;letter-spacing:-0.367px;">150</span>
<div style="left:591px;top:310px;width:200px;height:21px;background:#fff;border:1px solid #a9a9a9;box-sizing:border-box"></div>
<span style="left:594.5px;top:314.79px;font-size:11px;line-height:11px;color:#111;font-weight:400;letter-spacing:-0.326px;">3000</span>
<div style="left:331px;top:334px;width:13px;height:13px;background:#fff;border:1px solid #5a5a5a;box-sizing:border-box"></div>
<span style="left:347px;top:335.19px;font-size:11px;line-height:11px;color:#111;font-weight:400;letter-spacing:-0.223px;">Wprowadź PIN przed połączeniem lub próbą odebrania, sprawdzenia SMSów</span>
<div style="left:331px;top:360px;width:13px;height:13px;background:#fff;border:1px solid #5a5a5a;box-sizing:border-box"></div>
<span style="left:347px;top:361.19px;font-size:11px;line-height:11px;color:#111;font-weight:400;letter-spacing:-0.216px;">Nie sprawdzaj poprawności PIN podczas próby połączenia</span>
<div style="left:331px;top:380px;width:13px;height:13px;background:#fff;border:1px solid #5a5a5a;box-sizing:border-box"></div>
<span style="left:347px;top:381.19px;font-size:11px;line-height:11px;color:#111;font-weight:400;letter-spacing:-0.218px;">Zainicjuj modem podczas uruchamiania programu, ustawienie główne dla modemu</span>
<div style="left:331px;top:400px;width:13px;height:13px;background:#fff;border:1px solid #5a5a5a;box-sizing:border-box"></div>
<svg style="position:absolute;left:333px;top:402px;" width="9" height="9" viewBox="0 0 9 9"><path d="M1 4.5 L3.5 7 L8 1.5" fill="none" stroke="#111" stroke-width="1.8"/></svg>
<span style="left:347px;top:401.19px;font-size:11px;line-height:11px;color:#111;font-weight:400;letter-spacing:-0.205px;">Zainicjuj modem podczas próby połączenia (pomaga jeżeli modem nie loguje się do sieci)</span>
<div style="left:335px;top:427px;width:13px;height:13px;background:#fff;border:1px solid #5a5a5a;box-sizing:border-box"></div>
<span style="left:351px;top:428.19px;font-size:11px;line-height:11px;color:#111;font-weight:400;letter-spacing:-0.212px;">Wyślij komendę przed połączeniem z internetem:</span>
<div style="left:335px;top:440px;width:250px;height:21px;background:#fff;border:1px solid #a9a9a9;box-sizing:border-box"></div>
<span style="left:338.5px;top:444.79px;font-size:11px;line-height:11px;color:#111;font-weight:400;letter-spacing:-0.53px;">AT</span>
<div style="left:599px;top:427px;width:13px;height:13px;background:#fff;border:1px solid #5a5a5a;box-sizing:border-box"></div>
<span style="left:615px;top:428.19px;font-size:11px;line-height:11px;color:#111;font-weight:400;letter-spacing:-0.215px;">Wyślij komendę AT po połączeniu:</span>
<div style="left:599px;top:440px;width:247px;height:21px;background:#fff;border:1px solid #a9a9a9;box-sizing:border-box"></div>
<span style="left:602.5px;top:444.79px;font-size:11px;line-height:11px;color:#111;font-weight:400;letter-spacing:-0.53px;">AT</span>
<div style="left:329px;top:477px;width:264px;height:103px;border:1px solid #d8d8d8;box-sizing:border-box"></div>
<div style="left:336px;top:470px;width:140px;height:12px;background:#f0f0f0"></div>
<span style="left:339.5px;top:471.19px;font-size:11px;line-height:11px;color:#111;font-weight:400;letter-spacing:-0.225px;">AT - okno główne programu</span>
<div style="left:593px;top:477px;width:264px;height:103px;border:1px solid #d8d8d8;box-sizing:border-box"></div>
<div style="left:600px;top:470px;width:164px;height:12px;background:#f0f0f0"></div>
<span style="left:604.5px;top:471.19px;font-size:11px;line-height:11px;color:#111;font-weight:400;letter-spacing:-0.219px;">Inne związane z komunikacją AT</span>
<div style="left:335px;top:492px;width:13px;height:13px;background:#fff;border:1px solid #5a5a5a;box-sizing:border-box"></div>
<svg style="position:absolute;left:337px;top:494px;" width="9" height="9" viewBox="0 0 9 9"><path d="M1 4.5 L3.5 7 L8 1.5" fill="none" stroke="#111" stroke-width="1.8"/></svg>
<span style="left:351px;top:493.19px;font-size:11px;line-height:11px;color:#111;font-weight:400;letter-spacing:-0.202px;">Wyświetlaj operatora i technologię sieciową</span>
<div style="left:335px;top:512px;width:13px;height:13px;background:#fff;border:1px solid #5a5a5a;box-sizing:border-box"></div>
<svg style="position:absolute;left:337px;top:514px;" width="9" height="9" viewBox="0 0 9 9"><path d="M1 4.5 L3.5 7 L8 1.5" fill="none" stroke="#111" stroke-width="1.8"/></svg>
<span style="left:351px;top:513.19px;font-size:11px;line-height:11px;color:#111;font-weight:400;letter-spacing:-0.219px;">Wyświetlaj poziom sygnału</span>
<div style="left:335px;top:532px;width:13px;height:13px;background:#fff;border:1px solid #5a5a5a;box-sizing:border-box"></div>
<span style="left:351px;top:533.19px;font-size:11px;line-height:11px;color:#111;font-weight:400;letter-spacing:-0.205px;">Wyświetlaj BTS, sektor, stronę</span>
<div style="left:335px;top:552px;width:13px;height:13px;background:#fff;border:1px solid #5a5a5a;box-sizing:border-box"></div>
<svg style="position:absolute;left:337px;top:554px;" width="9" height="9" viewBox="0 0 9 9"><path d="M1 4.5 L3.5 7 L8 1.5" fill="none" stroke="#111" stroke-width="1.8"/></svg>
<span style="left:351px;top:553.19px;font-size:11px;line-height:11px;color:#111;font-weight:400;letter-spacing:-0.209px;">Wyświetlaj poziom naładowania baterii</span>
<div style="left:599px;top:492px;width:13px;height:13px;background:#fff;border:1px solid #5a5a5a;box-sizing:border-box"></div>
<span style="left:615px;top:493.19px;font-size:11px;line-height:11px;color:#111;font-weight:400;letter-spacing:-0.222px;">Używaj CGREG zamiast CREG (operator i techn.)</span>
<div style="left:599px;top:512px;width:13px;height:13px;background:#fff;border:1px solid #5a5a5a;box-sizing:border-box"></div>
<span style="left:615px;top:513.19px;font-size:11px;line-height:11px;color:#111;font-weight:400;letter-spacing:-0.21px;">Informuj o nadchodzącym połączeniu tel.</span>
<span style="left:329.5px;top:582.39px;font-size:11px;line-height:11px;color:#0a1aa8;font-weight:400;letter-spacing:-0.214px;text-decoration:underline;text-decoration-skip-ink:none;text-underline-offset:1.5px">Przyczyna ostatniego błędnego połączenia</span>
<span style="left:163px;top:602.69px;font-size:11px;line-height:11px;color:#111;font-weight:400;letter-spacing:-0.228px;">Top_netinfo</span>
<div style="left:707px;top:31px;width:620px;height:418px;background:#f0f0f0;border:1px solid #cfcfcf;box-sizing:border-box"></div>
<svg style="position:absolute;left:716px;top:37px;" width="18" height="17" viewBox="0 0 18 17"><text x="1" y="5.6" font-family="Liberation Sans" font-weight="700" font-size="6.8" fill="#111">TNI</text><rect x="2.0" y="13.5" width="2.3" height="3.0" fill="#30b030" stroke="#111" stroke-width="0.7"/><rect x="4.5" y="11.2" width="2.3" height="5.3" fill="#30b030" stroke="#111" stroke-width="0.7"/><rect x="7.0" y="8.9" width="2.3" height="7.6" fill="#30b030" stroke="#111" stroke-width="0.7"/><rect x="9.5" y="6.6" width="2.3" height="9.9" fill="#9aa0a0" stroke="#111" stroke-width="0.7"/><rect x="12.0" y="4.3" width="2.3" height="12.2" fill="#9aa0a0" stroke="#111" stroke-width="0.7"/><rect x="14.5" y="2.0" width="2.3" height="14.5" fill="#9aa0a0" stroke="#111" stroke-width="0.7"/><circle cx="3.2" cy="10" r="2.2" fill="#d84028"/></svg>
<span style="left:954px;top:38.80px;font-size:15px;line-height:15px;color:#333;font-weight:400;letter-spacing:-0.042px;">Wybór operatora</span>
<div style="left:1218px;top:45px;width:8px;height:1px;background:#777"></div>
<div style="left:1244px;top:38px;width:10px;height:8px;border:1px solid #222;border-top-width:2px;box-sizing:border-box"></div>
<div style="left:1262px;top:32px;width:43px;height:20px;background:#c6c6c6"></div>
<svg style="position:absolute;left:1280px;top:38px;" width="10" height="10" viewBox="0 0 10 10"><path d="M1 1 L9 9 M9 1 L1 9" stroke="#fff" stroke-width="1.4"/></svg>
<div style="left:714px;top:61px;width:600px;height:1px;background:#d8d8d8"></div>
<div style="left:714px;top:61px;width:1px;height:335px;background:#d8d8d8"></div>
<div style="left:718px;top:65px;width:73px;height:19px;border:1px solid #acacac;box-sizing:border-box;background:linear-gradient(#f0f0f0,#e5e5e5)"></div>
<span style="left:554.5px;width:400px;text-align:center;top:70.19px;font-size:11px;line-height:11px;color:#111;font-weight:400;letter-spacing:-0.211px;">Odśwież</span>
<div style="left:793px;top:65px;width:73px;height:19px;border:1px solid #acacac;box-sizing:border-box;background:linear-gradient(#f0f0f0,#e5e5e5)"></div>
<span style="left:629.5px;width:400px;text-align:center;top:70.19px;font-size:11px;line-height:11px;color:#111;font-weight:400;letter-spacing:-0.18px;">Zaloguj</span>
<div style="left:868px;top:65px;width:73px;height:19px;border:1px solid #acacac;box-sizing:border-box;background:linear-gradient(#f0f0f0,#e5e5e5)"></div>
<span style="left:704.5px;width:400px;text-align:center;top:70.19px;font-size:11px;line-height:11px;color:#111;font-weight:400;letter-spacing:-0.195px;">Wyloguj</span>
<div style="left:943px;top:65px;width:101px;height:19px;border:1px solid #acacac;box-sizing:border-box;background:linear-gradient(#f0f0f0,#e5e5e5)"></div>
<span style="left:793.5px;width:400px;text-align:center;top:70.19px;font-size:11px;line-height:11px;color:#111;font-weight:400;letter-spacing:-0.162px;">Aktualny operator</span>
<div style="left:1046px;top:65px;width:73px;height:19px;border:1px solid #acacac;box-sizing:border-box;background:linear-gradient(#f0f0f0,#e5e5e5)"></div>
<span style="left:882.5px;width:400px;text-align:center;top:70.19px;font-size:11px;line-height:11px;color:#111;font-weight:400;letter-spacing:-0.257px;">Pomoc</span>
<div style="left:1121px;top:65px;width:128px;height:19px;border:1px solid #acacac;box-sizing:border-box;background:linear-gradient(#f0f0f0,#e5e5e5)"></div>
<span style="left:985.0px;width:400px;text-align:center;top:70.19px;font-size:11px;line-height:11px;color:#111;font-weight:400;letter-spacing:-0.169px;">Odp. modemu do listy</span>
<div style="left:715px;top:87px;width:600px;height:205px;background:#fff;border:1px solid #828790;border-right:none;box-sizing:border-box"></div>
<div style="left:751px;top:88px;width:1px;height:24px;background:#e8e8e8"></div>
<div style="left:842px;top:88px;width:1px;height:24px;background:#e8e8e8"></div>
<div style="left:981px;top:88px;width:1px;height:24px;background:#e8e8e8"></div>
<div style="left:1081px;top:88px;width:1px;height:24px;background:#e8e8e8"></div>
<div style="left:1171px;top:88px;width:1px;height:24px;background:#e8e8e8"></div>
<div style="left:1286px;top:88px;width:1px;height:24px;background:#e8e8e8"></div>
<div style="left:716px;top:112px;width:589px;height:1px;background:#ececec"></div>
<span style="left:723px;top:95.09px;font-size:11px;line-height:11px;color:#222;font-weight:400;letter-spacing:-0.229px;">Lp.</span>
<span style="left:758px;top:95.09px;font-size:11px;line-height:11px;color:#222;font-weight:400;letter-spacing:-0.187px;">Status</span>
<span style="left:847.5px;top:95.09px;font-size:11px;line-height:11px;color:#222;font-weight:400;letter-spacing:-0.191px;">Długa nazwa</span>
<span style="left:987.5px;top:95.09px;font-size:11px;line-height:11px;color:#222;font-weight:400;letter-spacing:-0.182px;">Krótka nazwa</span>
<span style="left:1087.7px;top:95.09px;font-size:11px;line-height:11px;color:#222;font-weight:400;letter-spacing:-0.162px;">Id operatora</span>
<span style="left:1177.8px;top:95.09px;font-size:11px;line-height:11px;color:#222;font-weight:400;letter-spacing:-0.165px;">AcT (access type)</span>
<div style="left:721px;top:164px;width:565px;height:17px;background:#3399ff"></div>
<span style="left:724px;top:117.69px;font-size:11px;line-height:11px;color:#111;font-weight:400;letter-spacing:-0.184px;">1</span>
<span style="left:758px;top:117.69px;font-size:11px;line-height:11px;color:#111;font-weight:400;letter-spacing:-0.191px;">dostępny</span>
<span style="left:847.5px;top:117.69px;font-size:11px;line-height:11px;color:#111;font-weight:400;letter-spacing:-0.22px;">Aero2</span>
<span style="left:987.5px;top:117.69px;font-size:11px;line-height:11px;color:#111;font-weight:400;letter-spacing:-0.22px;">Aero2</span>
<span style="left:1087.7px;top:117.69px;font-size:11px;line-height:11px;color:#111;font-weight:400;letter-spacing:-0.229px;">26001</span>
<span style="left:1177.8px;top:117.69px;font-size:11px;line-height:11px;color:#111;font-weight:400;letter-spacing:-0.312px;">UMTS</span>
<span style="left:724px;top:134.69px;font-size:11px;line-height:11px;color:#111;font-weight:400;letter-spacing:-0.184px;">2</span>
<span style="left:758px;top:134.69px;font-size:11px;line-height:11px;color:#d42a3a;font-weight:400;letter-spacing:-0.178px;">niedostępny</span>
<span style="left:847.5px;top:134.69px;font-size:11px;line-height:11px;color:#d42a3a;font-weight:400;letter-spacing:-0.257px;">Era</span>
<span style="left:987.5px;top:134.69px;font-size:11px;line-height:11px;color:#d42a3a;font-weight:400;letter-spacing:-0.257px;">Era</span>
<span style="left:1087.7px;top:134.69px;font-size:11px;line-height:11px;color:#d42a3a;font-weight:400;letter-spacing:-0.229px;">26002</span>
<span style="left:1177.8px;top:134.69px;font-size:11px;line-height:11px;color:#d42a3a;font-weight:400;letter-spacing:-0.376px;">GSM</span>
<span style="left:724px;top:151.69px;font-size:11px;line-height:11px;color:#111;font-weight:400;letter-spacing:-0.184px;">3</span>
<span style="left:758px;top:151.69px;font-size:11px;line-height:11px;color:#d42a3a;font-weight:400;letter-spacing:-0.178px;">niedostępny</span>
<span style="left:847.5px;top:151.69px;font-size:11px;line-height:11px;color:#d42a3a;font-weight:400;letter-spacing:-0.229px;">26006</span>
<span style="left:987.5px;top:151.69px;font-size:11px;line-height:11px;color:#d42a3a;font-weight:400;letter-spacing:-0.229px;">26006</span>
<span style="left:1087.7px;top:151.69px;font-size:11px;line-height:11px;color:#d42a3a;font-weight:400;letter-spacing:-0.229px;">26006</span>
<span style="left:1177.8px;top:151.69px;font-size:11px;line-height:11px;color:#d42a3a;font-weight:400;letter-spacing:-0.312px;">UMTS</span>
<span style="left:724px;top:166.69px;font-size:11px;line-height:11px;color:#111;font-weight:400;letter-spacing:-0.184px;">4</span>
<span style="left:758px;top:166.69px;font-size:11px;line-height:11px;color:#111;font-weight:400;letter-spacing:-0.191px;">dostępny</span>
<span style="left:847.5px;top:166.69px;font-size:11px;line-height:11px;color:#111;font-weight:400;letter-spacing:-0.22px;">Aero2</span>
<span style="left:987.5px;top:166.69px;font-size:11px;line-height:11px;color:#111;font-weight:400;letter-spacing:-0.22px;">Aero2</span>
<span style="left:1087.7px;top:166.69px;font-size:11px;line-height:11px;color:#111;font-weight:400;letter-spacing:-0.229px;">26001</span>
<span style="left:1177.8px;top:166.69px;font-size:11px;line-height:11px;color:#111;font-weight:400;letter-spacing:-0.376px;">GSM</span>
<span style="left:724px;top:185.69px;font-size:11px;line-height:11px;color:#111;font-weight:400;letter-spacing:-0.184px;">5</span>
<span style="left:758px;top:185.69px;font-size:11px;line-height:11px;color:#d42a3a;font-weight:400;letter-spacing:-0.178px;">niedostępny</span>
<span style="left:847.5px;top:185.69px;font-size:11px;line-height:11px;color:#d42a3a;font-weight:400;letter-spacing:-0.229px;">26006</span>
<span style="left:987.5px;top:185.69px;font-size:11px;line-height:11px;color:#d42a3a;font-weight:400;letter-spacing:-0.229px;">26006</span>
<span style="left:1087.7px;top:185.69px;font-size:11px;line-height:11px;color:#d42a3a;font-weight:400;letter-spacing:-0.229px;">26006</span>
<span style="left:1177.8px;top:185.69px;font-size:11px;line-height:11px;color:#d42a3a;font-weight:400;letter-spacing:-0.376px;">GSM</span>
<span style="left:724px;top:202.69px;font-size:11px;line-height:11px;color:#111;font-weight:400;letter-spacing:-0.184px;">6</span>
<span style="left:758px;top:202.69px;font-size:11px;line-height:11px;color:#d42a3a;font-weight:400;letter-spacing:-0.178px;">niedostępny</span>
<span style="left:847.5px;top:202.69px;font-size:11px;line-height:11px;color:#d42a3a;font-weight:400;letter-spacing:-0.173px;">PTK Centertel</span>
<span style="left:987.5px;top:202.69px;font-size:11px;line-height:11px;color:#d42a3a;font-weight:400;letter-spacing:-0.209px;">PL IDEA</span>
<span style="left:1087.7px;top:202.69px;font-size:11px;line-height:11px;color:#d42a3a;font-weight:400;letter-spacing:-0.229px;">26003</span>
<span style="left:1177.8px;top:202.69px;font-size:11px;line-height:11px;color:#d42a3a;font-weight:400;letter-spacing:-0.376px;">GSM</span>
<span style="left:724px;top:219.69px;font-size:11px;line-height:11px;color:#111;font-weight:400;letter-spacing:-0.184px;">7</span>
<span style="left:758px;top:219.69px;font-size:11px;line-height:11px;color:#d42a3a;font-weight:400;letter-spacing:-0.178px;">niedostępny</span>
<span style="left:847.5px;top:219.69px;font-size:11px;line-height:11px;color:#d42a3a;font-weight:400;letter-spacing:-0.257px;">Era</span>
<span style="left:987.5px;top:219.69px;font-size:11px;line-height:11px;color:#d42a3a;font-weight:400;letter-spacing:-0.257px;">Era</span>
<span style="left:1087.7px;top:219.69px;font-size:11px;line-height:11px;color:#d42a3a;font-weight:400;letter-spacing:-0.229px;">26002</span>
<span style="left:1177.8px;top:219.69px;font-size:11px;line-height:11px;color:#d42a3a;font-weight:400;letter-spacing:-0.312px;">UMTS</span>
<span style="left:724px;top:236.69px;font-size:11px;line-height:11px;color:#111;font-weight:400;letter-spacing:-0.184px;">8</span>
<span style="left:758px;top:236.69px;font-size:11px;line-height:11px;color:#d42a3a;font-weight:400;letter-spacing:-0.178px;">niedostępny</span>
<span style="left:847.5px;top:236.69px;font-size:11px;line-height:11px;color:#d42a3a;font-weight:400;letter-spacing:-0.173px;">PTK Centertel</span>
<span style="left:987.5px;top:236.69px;font-size:11px;line-height:11px;color:#d42a3a;font-weight:400;letter-spacing:-0.209px;">PL IDEA</span>
<span style="left:1087.7px;top:236.69px;font-size:11px;line-height:11px;color:#d42a3a;font-weight:400;letter-spacing:-0.229px;">26003</span>
<span style="left:1177.8px;top:236.69px;font-size:11px;line-height:11px;color:#d42a3a;font-weight:400;letter-spacing:-0.312px;">UMTS</span>
<span style="left:718px;top:293.89px;font-size:11px;line-height:11px;color:#111;font-weight:400;letter-spacing:-0.31px;">Odpowiedź modemu:</span>
<div style="left:715px;top:306px;width:600px;height:89px;background:#fff;border:1px solid #a8a8a8;border-right:none;box-sizing:border-box"></div>
<div style="left:1288px;top:307px;width:17px;height:87px;background:#f0f0f0"></div>
<svg style="position:absolute;left:1292px;top:311px;" width="10" height="8" viewBox="0 0 10 8"><path d="M1 6 L5 2 L9 6" fill="none" stroke="#a0a0a0" stroke-width="1.3"/></svg>
<svg style="position:absolute;left:1292px;top:381px;" width="10" height="8" viewBox="0 0 10 8"><path d="M1 2 L5 6 L9 2" fill="none" stroke="#a0a0a0" stroke-width="1.3"/></svg>
<span style="left:721px;top:311.31px;font-size:10.5px;line-height:10.5px;color:#111;font-weight:400;letter-spacing:0.346px;">(1,&quot;Aero2&quot;,&quot;Aero2&quot;,&quot;26001&quot;,2),(3,&quot;Era&quot;,&quot;Era&quot;,&quot;26002&quot;,0),(3,&quot;26006&quot;,&quot;26006&quot;,&quot;26006&quot;,2),</span>
<span style="left:721px;top:324.26px;font-size:10.5px;line-height:10.5px;color:#111;font-weight:400;letter-spacing:0.281px;">(1,&quot;Aero2&quot;,&quot;Aero2&quot;,&quot;26001&quot;,0),(3,&quot;26006&quot;,&quot;26006&quot;,&quot;26006&quot;,0),(3,&quot;PTK Centertel&quot;,&quot;PL IDEA&quot;,&quot;26003&quot;,0),</span>
<span style="left:721px;top:337.21px;font-size:10.5px;line-height:10.5px;color:#111;font-weight:400;letter-spacing:0.229px;">(3,&quot;Era&quot;,&quot;Era&quot;,&quot;26002&quot;,2),(3,&quot;PTK Centertel&quot;,&quot;PL IDEA&quot;,&quot;26003&quot;,2),</span>
<div style="left:714px;top:403px;width:600px;height:39px;border:1px solid #d8d8d8;box-sizing:border-box"></div>
<div style="left:722px;top:396px;width:66px;height:12px;background:#f0f0f0"></div>
<span style="left:726px;top:397.19px;font-size:11px;line-height:11px;color:#111;font-weight:400;letter-spacing:-0.171px;">Top_netinfo</span>
<div style="left:1205px;top:411px;width:73px;height:21px;border:1px solid #acacac;box-sizing:border-box;background:linear-gradient(#f0f0f0,#e5e5e5)"></div>
<span style="left:1041.5px;width:400px;text-align:center;top:417.19px;font-size:11px;line-height:11px;color:#111;font-weight:400;letter-spacing:-0.193px;">Zamknij</span>
</body></html>
